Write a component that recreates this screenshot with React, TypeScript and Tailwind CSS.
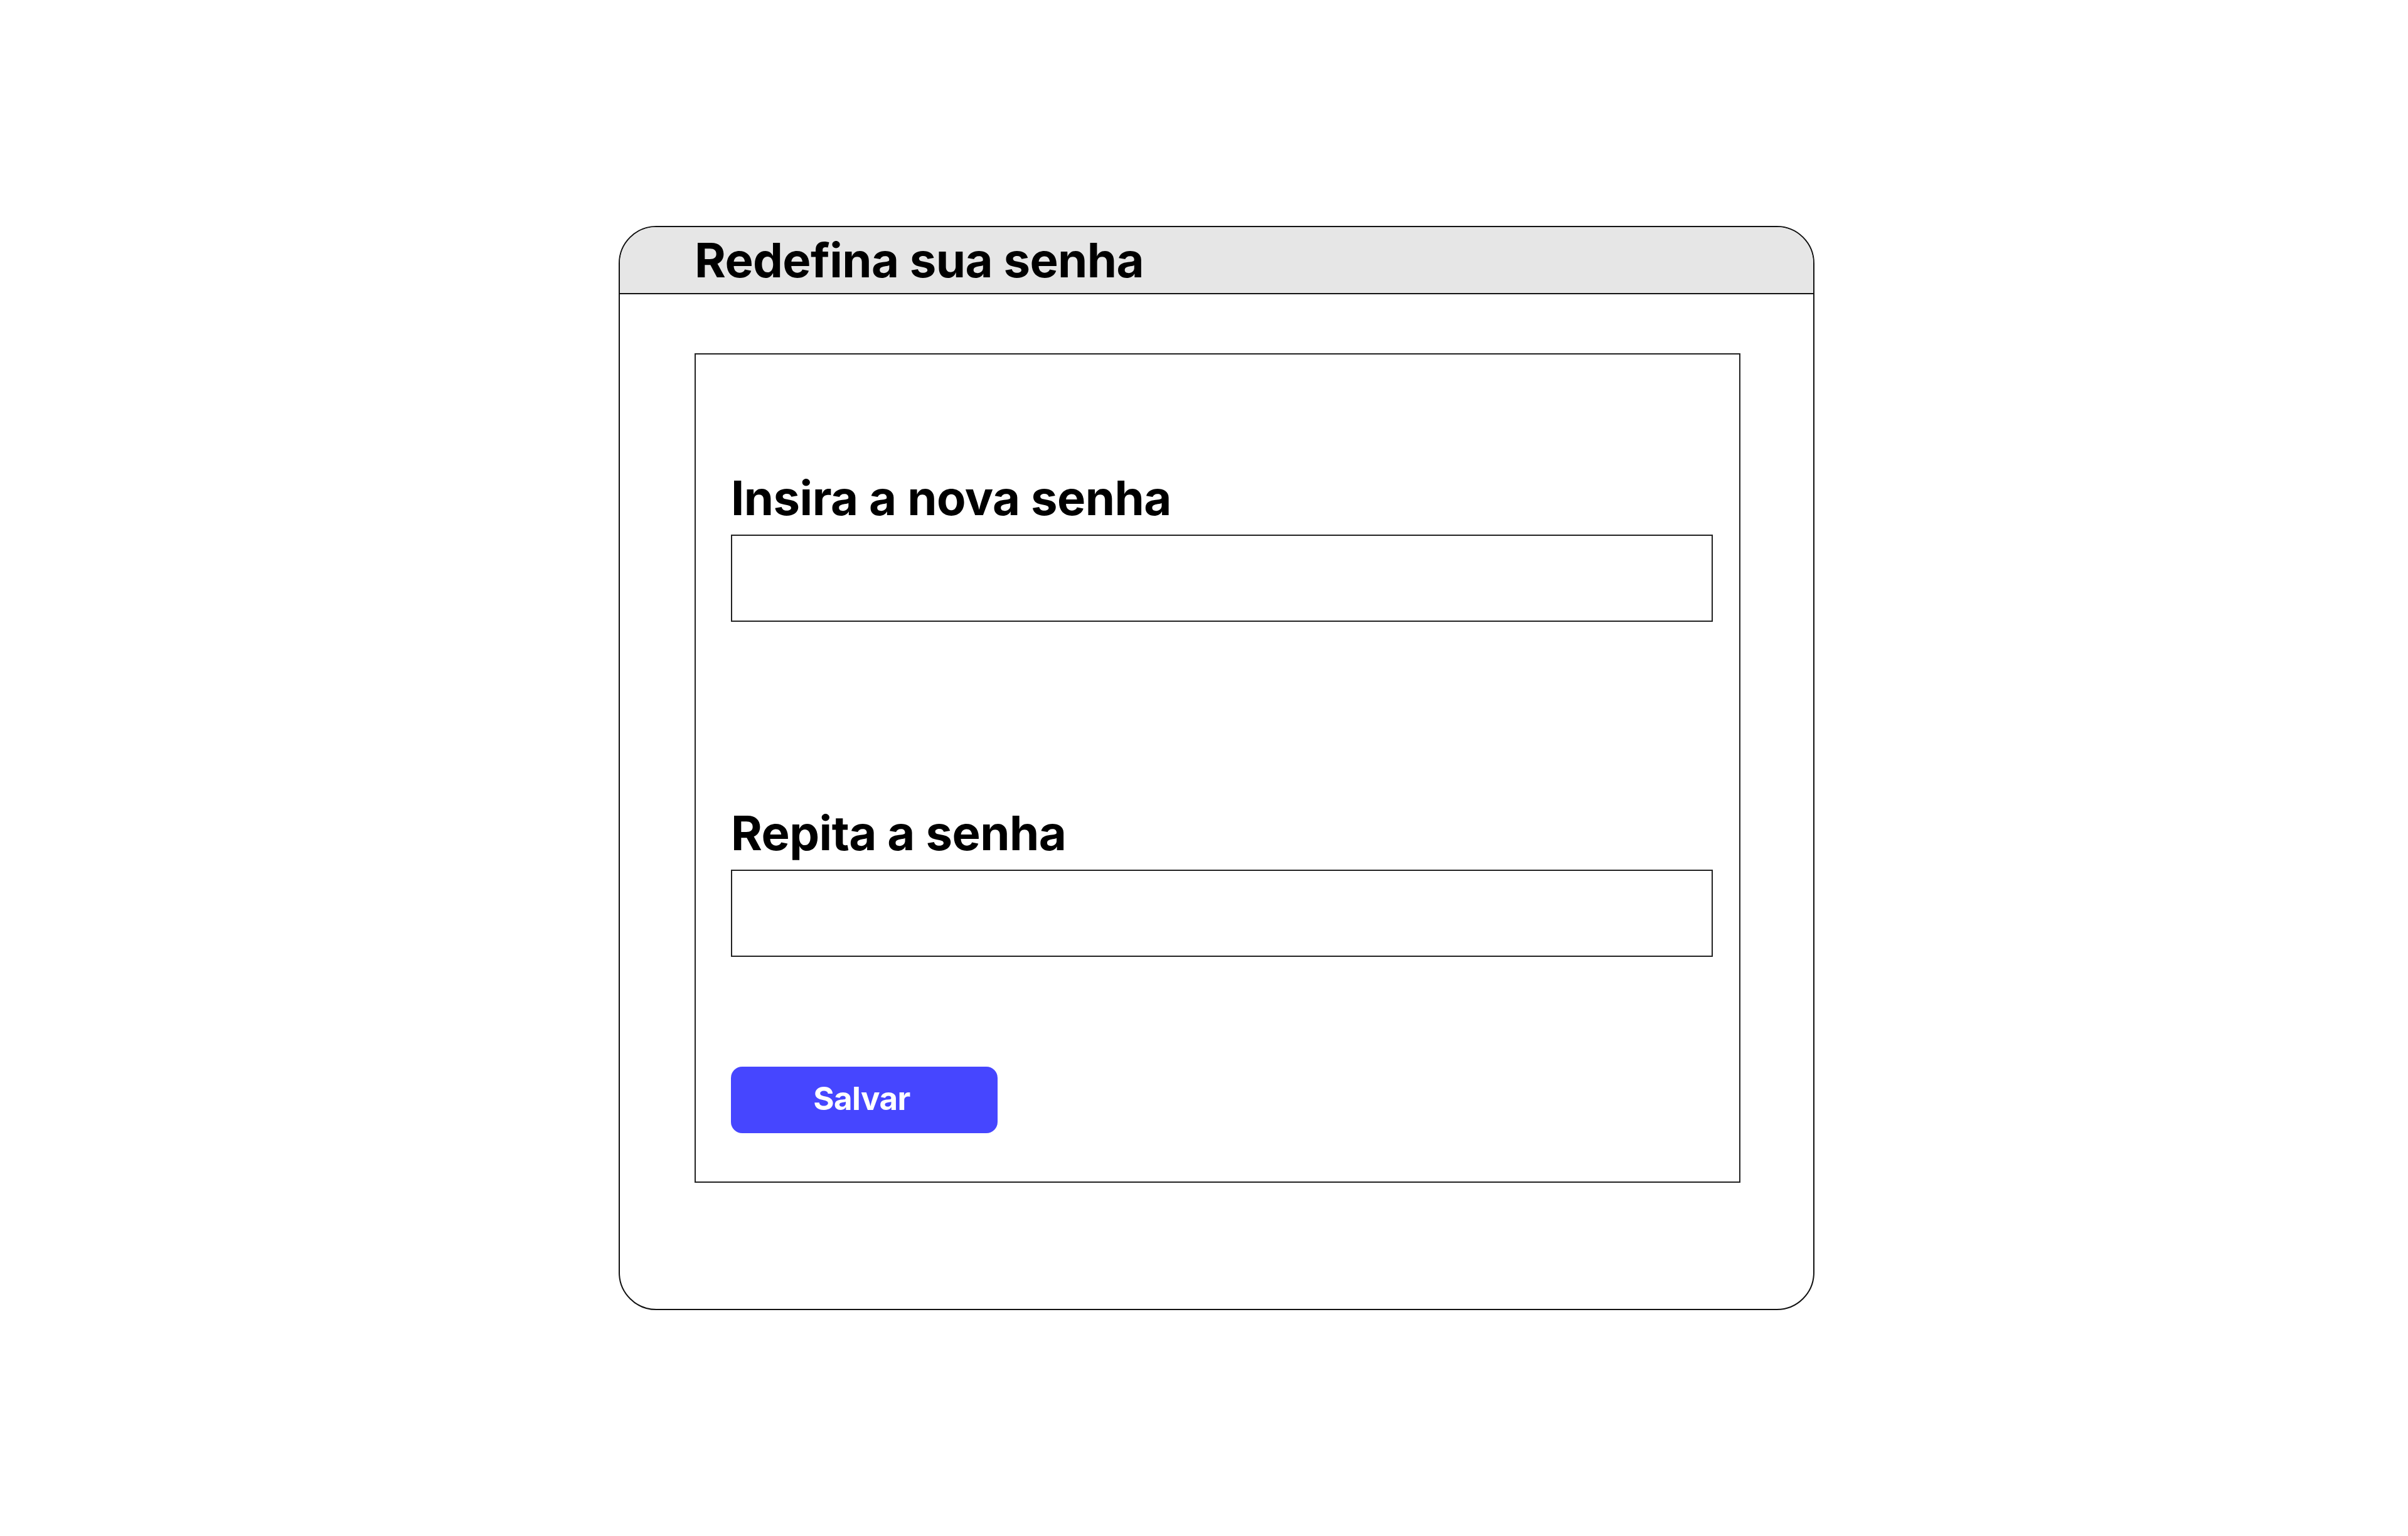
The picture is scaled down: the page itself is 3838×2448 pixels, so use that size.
import React from "react";

export default function App() {
  return (
    <div
      className="min-h-[2448px] w-[3838px] bg-white pt-[360px] pl-[986px]"
      style={{ fontFamily: "Inter, 'Noto Sans', sans-serif" }}
    >
      <div className="flex h-[1728px] w-[1906px] flex-col overflow-hidden rounded-[60px] border-2 border-[#111] bg-white">
        <div className="h-[107px] shrink-0 border-b-2 border-[#111] bg-[#e6e6e6] pt-[14px] pl-[119px]">
          <h1 className="text-[76px] font-bold leading-none tracking-[-0.008em] text-black">Redefina sua senha</h1>
        </div>
        <div className="pt-[94px] pl-[119px]">
          <div className="flex h-[1322px] w-[1667px] flex-col border-2 border-[#222] pt-[190px] pl-[56px]">
            <label className="mb-[21px] block text-[76px] font-bold leading-none tracking-[-0.007em] text-black">
              Insira a nova senha
            </label>
            <input
              type="password"
              className="h-[139px] w-[1565px] border-2 border-[#222] bg-white outline-none"
            />
            <label className="mt-[298px] mb-[21px] block text-[76px] font-bold leading-none tracking-[-0.007em] text-black">
              Repita a senha
            </label>
            <input
              type="password"
              className="h-[139px] w-[1565px] border-2 border-[#222] bg-white outline-none"
            />
            <button
              type="button"
              className="mt-[175px] flex h-[106px] w-[425px] items-center justify-center rounded-[18px] bg-[#4646ff] pb-[6px] pr-[8px] text-[51px] font-bold leading-none tracking-[-0.01em] text-white"
            >
              Salvar
            </button>
          </div>
        </div>
      </div>
    </div>
  );
}
